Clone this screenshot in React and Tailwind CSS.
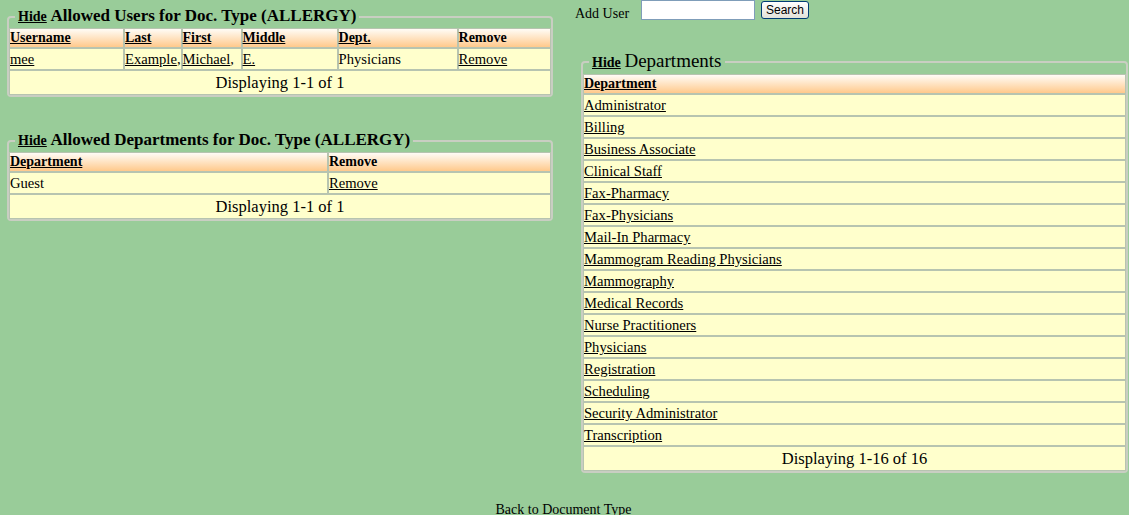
import React from "react";

const serif = { fontFamily: '"Liberation Serif", "DejaVu Serif", serif' };

const departments = [
  "Administrator",
  "Billing",
  "Business Associate",
  "Clinical Staff",
  "Fax-Pharmacy",
  "Fax-Physicians",
  "Mail-In Pharmacy",
  "Mammogram Reading Physicians",
  "Mammography",
  "Medical Records",
  "Nurse Practitioners",
  "Physicians",
  "Registration",
  "Scheduling",
  "Security Administrator",
  "Transcription",
];

const cell = "border border-[#b7c4b0] px-0 h-[22px] leading-[20px] text-left align-middle";
const head =
  "border border-[#b7c4b0] px-0 h-[20px] leading-[18px] text-left font-bold text-[14px] bg-linear-to-b from-[#fffcf6] to-[#ffc98b]";

const Footer = ({ span, text }) => (
  <tr>
    <td colSpan={span} className="border border-[#b7c4b0] h-[25px] text-center text-[16.5px] leading-[23px] bg-[#ffffcc]">
      {text}
    </td>
  </tr>
);

const Box = ({ title, big, children, className }) => (
  <fieldset className={`border-2 border-[#c9cec2] rounded-[4px] p-0 ${className}`}>
    <legend className="ml-[6px] px-[3px] leading-[22px]">
      <a className="underline font-bold text-[14px]">Hide</a>{" "}
      {big ? (
        <span className="text-[19px]">{title}</span>
      ) : (
        <span className="font-bold text-[17px]">{title}</span>
      )}
    </legend>
    {children}
  </fieldset>
);

export default function App() {
  return (
    <div className="w-[1129px] h-[515px] overflow-hidden bg-[#99cc99] text-[14.6px] text-black" style={serif}>
      <div className="flex">
        <div className="w-[565px] pl-[7px]">
          <Box title="Allowed Users for Doc. Type (ALLERGY)" className="w-[546px] mt-[5px]">
            <table className="w-full border-separate border-spacing-0">
              <thead>
                <tr>
                  <th className={`${head} w-[115px]`}><a className="underline">Username</a></th>
                  <th className={`${head} w-[57px]`}><a className="underline">Last</a></th>
                  <th className={`${head} w-[60px]`}><a className="underline">First</a></th>
                  <th className={`${head} w-[96px]`}><a className="underline">Middle</a></th>
                  <th className={`${head} w-[120px]`}><a className="underline">Dept.</a></th>
                  <th className={head}>Remove</th>
                </tr>
              </thead>
              <tbody className="bg-[#ffffcc]">
                <tr>
                  <td className={cell}><a className="underline">mee</a></td>
                  <td className={cell}><a className="underline">Example</a>,</td>
                  <td className={cell}><a className="underline">Michael</a>,</td>
                  <td className={cell}><a className="underline">E.</a></td>
                  <td className={cell}>Physicians</td>
                  <td className={cell}><a className="underline">Remove</a></td>
                </tr>
                <Footer span={6} text="Displaying 1-1 of 1" />
              </tbody>
            </table>
          </Box>

          <Box title="Allowed Departments for Doc. Type (ALLERGY)" className="w-[546px] mt-[32px]">
            <table className="w-full border-separate border-spacing-0">
              <thead>
                <tr>
                  <th className={`${head} w-[319px]`}><a className="underline">Department</a></th>
                  <th className={head}>Remove</th>
                </tr>
              </thead>
              <tbody className="bg-[#ffffcc]">
                <tr>
                  <td className={cell}>Guest</td>
                  <td className={cell}><a className="underline">Remove</a></td>
                </tr>
                <Footer span={2} text="Displaying 1-1 of 1" />
              </tbody>
            </table>
          </Box>
        </div>

        <div className="flex-1 pl-[10px]">
          <div className="flex items-start h-[20px]">
            <span className="mt-[3px] w-[66px] text-[14px]">Add User</span>
            <input
              className="w-[114px] h-[20px] bg-white border border-[#7f9db9] outline-none"
              defaultValue=""
            />
            <button
              className="ml-[6px] mt-[1px] h-[18px] w-[48px] rounded-[3px] border border-[#003c74] bg-linear-to-b from-white to-[#e3e2d9] text-[12px] leading-[14px] text-black"
              style={{ fontFamily: '"Liberation Sans", Arial, sans-serif' }}
            >
              Search
            </button>
          </div>

          <Box title="Departments" big className="w-[547px] ml-[6px] mt-[30px]">
            <table className="w-full border-separate border-spacing-0">
              <thead>
                <tr>
                  <th className={head}><a className="underline">Department</a></th>
                </tr>
              </thead>
              <tbody className="bg-[#ffffcc]">
                {departments.map((d) => (
                  <tr key={d}>
                    <td className={cell}><a className="underline">{d}</a></td>
                  </tr>
                ))}
                <Footer span={1} text="Displaying 1-16 of 16" />
              </tbody>
            </table>
          </Box>
        </div>
      </div>

      <div className="text-center mt-[26px] pr-[2px] text-[14px]">
        <a>Back to Document Type</a>
      </div>
    </div>
  );
}
